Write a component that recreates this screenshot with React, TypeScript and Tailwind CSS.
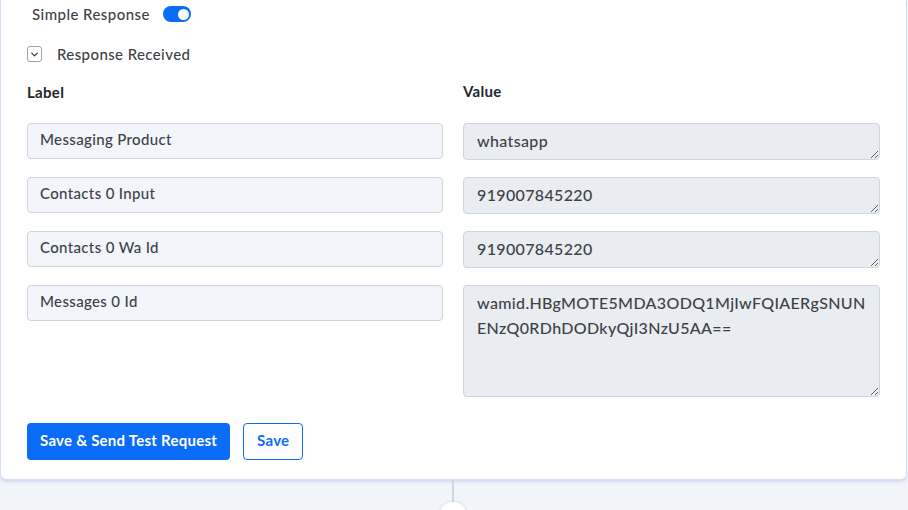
import React from 'react';
import { ChevronDown } from 'lucide-react';

type Field = { label: string; value: string; tall?: boolean };

const fields: Field[] = [
  { label: 'Messaging Product', value: 'whatsapp' },
  { label: 'Contacts 0 Input', value: '919007845220' },
  { label: 'Contacts 0 Wa Id', value: '919007845220' },
  { label: 'Messages 0 Id', value: 'wamid.HBgMOTE5MDA3ODQ1MjIwFQIAERgSNUNENzQ0RDhDODkyQjI3NzU5AA==', tall: true },
];

const Toggle: React.FC<{ on: boolean }> = ({ on }) => (
  <span
    className={`inline-flex h-[16px] w-[28px] items-center rounded-full px-[2px] ${
      on ? 'justify-end bg-[#0b6cf7]' : 'justify-start bg-gray-300'
    }`}
  >
    <span className="h-[11px] w-[11px] rounded-full bg-white" />
  </span>
);

export default function App() {
  return (
    <div
      className="flex h-[510px] w-full flex-col overflow-hidden bg-[#f1f4f9] text-[#3c4247]"
      style={{ fontFamily: 'Lato, "Open Sans", sans-serif' }}
    >
      <div className="w-[907px] rounded-b-md border-x border-b border-[#d6e0f3] bg-white pb-[19px] pl-[26px] shadow-[0_2px_3px_rgba(170,190,230,0.45)]">
        {/* simple response switch */}
        <div className="flex items-center gap-[13px] pl-[5px] pt-[4px]">
          <span className="text-[15px] leading-[20px] font-medium tracking-[0.45px]">Simple Response</span>
          <Toggle on />
        </div>

        {/* collapsible section header */}
        <div className="mt-[22px] flex h-[16px] items-center gap-[15px]">
          <span className="flex h-[16px] w-[15px] items-center justify-center rounded-[3px] border border-[#9ca3ab]">
            <ChevronDown size={11} strokeWidth={2.6} className="text-[#333]" />
          </span>
          <span className="text-[15px] leading-[20px] font-medium tracking-[0.4px]">Response Received</span>
        </div>

        <div className="mt-[19px] grid w-[853px] grid-cols-[416px_417px] gap-x-[20px] gap-y-[17px]">
          <div className="pb-[4px] pt-[1px] text-[15px] leading-[20px] font-bold tracking-[0.3px] text-[#22262a]">
            Label
          </div>
          <div className="text-[15px] leading-[20px] font-bold tracking-[0.3px] text-[#22262a]">Value</div>

          {fields.map((f) => (
            <React.Fragment key={f.label}>
              <input
                readOnly
                value={f.label}
                className="h-[36px] w-full rounded-[4px] border border-[#cfd5de] bg-[#f2f5fa] px-[12px] pb-[4px] text-[15px] font-medium tracking-[0.35px] text-[#3c4247] outline-none"
              />
              <textarea
                readOnly
                value={f.value}
                className={`${
                  f.tall ? 'h-[112px]' : 'h-[37px]'
                } w-full rounded-[4px] border border-[#cfd5de] bg-[#e9ecf0] px-[13px] pt-[4px] text-[16px] leading-[25px] font-medium tracking-[0.35px] text-[#3c4247] outline-none`}
              />
            </React.Fragment>
          ))}
        </div>

        <div className="mt-[26px] flex gap-[13px]">
          <button className="h-[37px] rounded-[4px] bg-[#0b6cf7] px-[13px] pb-[3px] text-[15px] font-bold tracking-[0.25px] text-white">
            Save &amp; Send Test Request
          </button>
          <button className="h-[37px] rounded-[4px] border border-[#0b6cf7] bg-white px-[13px] pb-[3px] text-[15px] font-bold tracking-[0.25px] text-[#0b6cf7]">
            Save
          </button>
        </div>
      </div>

      {/* connector to the next node */}
      <div className="flex flex-col items-center pr-[2px]">
        <div className="h-[22px] w-[2px] bg-[#cfd6e0]" />
        <div className="h-[24px] w-[26px] rounded-full bg-white shadow-[0_0_3px_rgba(150,165,190,0.4)]" />
      </div>
    </div>
  );
}
